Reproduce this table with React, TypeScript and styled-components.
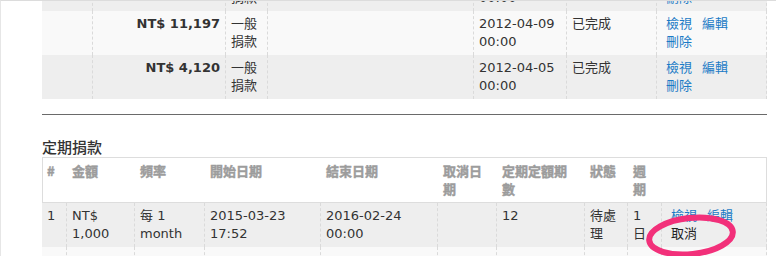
import styled, { createGlobalStyle } from 'styled-components'

const GlobalStyle = createGlobalStyle`
	html, body {
		margin: 0;
		padding: 0;
		background: #fff;
		overflow: hidden;
	}
	body {
		border-top: 1px solid #dcdcdc;
		border-left: 1px solid #e6e6e6;
		height: 256px;
		box-sizing: border-box;
		font-family: 'DejaVu Sans', 'Noto Sans CJK TC', sans-serif;
		font-size: 13px;
		line-height: 18px;
		color: #333;
	}
`

type Donation = {
	amount: string
	kind: string[]
	date: string[]
	status: string
}

const donations: Donation[] = [
	{ amount: 'NT$ 3,000', kind: ['一般', '捐款'], date: ['2012-04-12', '00:00'], status: '已完成' },
	{ amount: 'NT$ 11,197', kind: ['一般', '捐款'], date: ['2012-04-09', '00:00'], status: '已完成' },
	{ amount: 'NT$ 4,120', kind: ['一般', '捐款'], date: ['2012-04-05', '00:00'], status: '已完成' },
]

const topCols = '51px 133px 42px 206px 93px 90px 110px'
const subCols = '25px 68px 70px 116px 117px 59px 88px 43px 34px 105px'

const subHeaders = ['#', '金額', '頻率', '開始日期', '結束日期', '取消日期', '定期定額期數', '狀態', '週期', '']

export default function App() {
	return (
		<>
			<GlobalStyle />
			<Page>
				<ScrolledList>
					{donations.map((d, i) => (
						<GridRow key={d.date[0]} $cols={topCols} $bg={i % 2 === 0 ? '#eeeeee' : '#f9f9f9'}>
							<Cell $divider />
							<Cell $divider $align='right' $bold>
								{d.amount}
							</Cell>
							<Cell $divider>
								{d.kind[0]}
								<br />
								{d.kind[1]}
							</Cell>
							<Cell $divider />
							<Cell $divider>
								{d.date[0]}
								<br />
								{d.date[1]}
							</Cell>
							<Cell $divider>{d.status}</Cell>
							<ActionCell $divider>
								<ActionLink>檢視</ActionLink>
								<ActionLink>編輯</ActionLink>
								<ActionLink>刪除</ActionLink>
							</ActionCell>
						</GridRow>
					))}
				</ScrolledList>

				<Rule />

				<SectionTitle>定期捐款</SectionTitle>

				<TableWrap>
					<HeaderRow $cols={subCols}>
						{subHeaders.map((h, i) => (
							<HeadCell key={i}>{h}</HeadCell>
						))}
					</HeaderRow>
					<GridRow $cols={subCols} $bg='#eeeeee'>
						<Cell $divider>1</Cell>
						<Cell $divider>
							NT$
							<br />
							1,000
						</Cell>
						<Cell $divider>
							每 1
							<br />
							month
						</Cell>
						<Cell $divider>
							2015-03-23
							<br />
							17:52
						</Cell>
						<Cell $divider>
							2016-02-24
							<br />
							00:00
						</Cell>
						<Cell $divider />
						<Cell $divider>12</Cell>
						<Cell $divider>
							待處
							<br />
							理
						</Cell>
						<Cell $divider>
							1
							<br />
							日
						</Cell>
						<ActionCell $divider>
							<ActionLink>檢視</ActionLink>
							<ActionLink>編輯</ActionLink>
							<ActionLink $plain>取消</ActionLink>
						</ActionCell>
					</GridRow>
					<GridRow $cols={subCols} $bg='#f9f9f9'>
						{subHeaders.map((_, i) => (
							<Cell key={i} $divider />
						))}
					</GridRow>

					<Highlight width='94' height='46' viewBox='0 0 94 46'>
						<ellipse
							cx='46'
							cy='22'
							rx='42'
							ry='18'
							fill='none'
							stroke='#f2307a'
							strokeWidth='6'
							transform='rotate(-6 46 22)'
						/>
					</Highlight>
				</TableWrap>
			</Page>
		</>
	)
}

const Page = styled.div`
	width: 725px;
	margin-left: 41px;
`

const ScrolledList = styled.div`
	margin-top: -34px;
`

const GridRow = styled.div<{ $cols: string; $bg: string }>`
	display: grid;
	grid-template-columns: ${(p) => p.$cols};
	background: ${(p) => p.$bg};
`

const Cell = styled.div<{ $divider?: boolean; $align?: string; $bold?: boolean }>`
	box-sizing: border-box;
	min-height: 44px;
	padding: 4px 5px;
	text-align: ${(p) => p.$align ?? 'left'};
	font-weight: ${(p) => (p.$bold ? 700 : 400)};
	border-right: ${(p) => (p.$divider ? '1px dashed #dadada' : 'none')};
	white-space: nowrap;
`

const ActionCell = styled(Cell)`
	padding: 4px 18px 4px 9px;
	white-space: normal;
`

const ActionLink = styled.span<{ $plain?: boolean }>`
	display: inline-block;
	margin-right: 10px;
	color: ${(p) => (p.$plain ? '#222' : '#1b7bc6')};
	cursor: pointer;
`

const Rule = styled.hr`
	margin: 15px 0 0;
	border: 0;
	border-top: 1px solid #6a6a6a;
	height: 0;
`

const SectionTitle = styled.div`
	margin-top: 21px;
	font-family: 'Noto Sans CJK TC', sans-serif;
	font-size: 15px;
	font-weight: 500;
	line-height: 21px;
	color: #333;
`

const TableWrap = styled.div`
	position: relative;
`

const HeaderRow = styled.div<{ $cols: string }>`
	display: grid;
	grid-template-columns: ${(p) => p.$cols};
	border: 1px solid #dddddd;
	background: #fff;
`

const HeadCell = styled.div`
	box-sizing: border-box;
	min-height: 44px;
	padding: 4px 9px 4px 4px;
	font-family: 'Noto Sans CJK TC', 'DejaVu Sans', sans-serif;
	font-weight: 700;
	color: #9c9c9c;
	-webkit-text-stroke: 0.45px #9c9c9c;
`

const Highlight = styled.svg`
	position: absolute;
	left: 603px;
	top: 57px;
	overflow: visible;
`
